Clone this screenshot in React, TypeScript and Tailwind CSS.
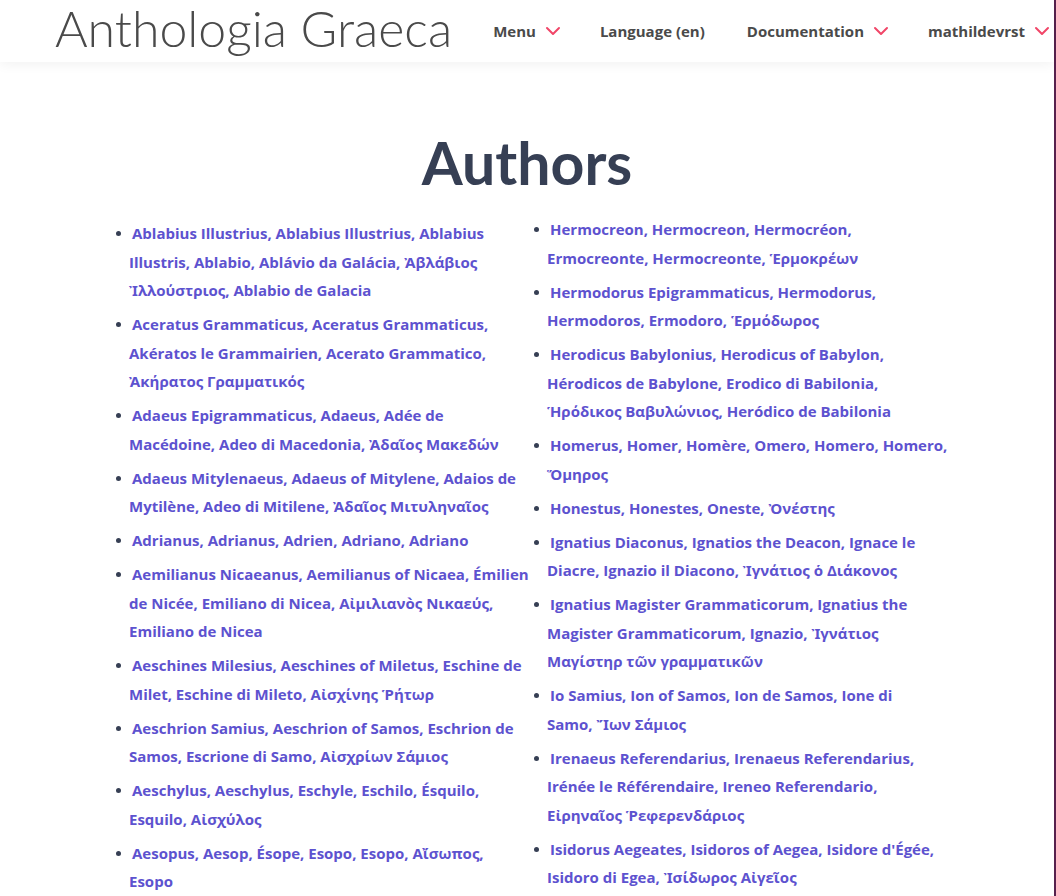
import { ChevronDown } from 'lucide-react';

const left = [
  'Ablabius Illustrius, Ablabius Illustrius, Ablabius Illustris, Ablabio, Ablávio da Galácia, Ἀβλάβιος Ἰλλούστριος, Ablabio de Galacia',
  'Aceratus Grammaticus, Aceratus Grammaticus, Akératos le Grammairien, Acerato Grammatico, Ἀκήρατος Γραμματικός',
  'Adaeus Epigrammaticus, Adaeus, Adée de Macédoine, Adeo di Macedonia, Ἀδαῖος Μακεδών',
  'Adaeus Mitylenaeus, Adaeus of Mitylene, Adaios de Mytilène, Adeo di Mitilene, Ἀδαῖος Μιτυληναῖος',
  'Adrianus, Adrianus, Adrien, Adriano, Adriano',
  'Aemilianus Nicaeanus, Aemilianus of Nicaea, Émilien de Nicée, Emiliano di Nicea, Αἰμιλιανὸς Νικαεύς, Emiliano de Nicea',
  'Aeschines Milesius, Aeschines of Miletus, Eschine de Milet, Eschine di Mileto, Αἰσχίνης Ῥήτωρ',
  'Aeschrion Samius, Aeschrion of Samos, Eschrion de Samos, Escrione di Samo, Αἰσχρίων Σάμιος',
  'Aeschylus, Aeschylus, Eschyle, Eschilo, Ésquilo, Esquilo, Αἰσχύλος',
  'Aesopus, Aesop, Ésope, Esopo, Esopo, Αἴσωπος, Esopo',
];

const right = [
  'Hermocreon, Hermocreon, Hermocréon, Ermocreonte, Hermocreonte, Ἑρμοκρέων',
  'Hermodorus Epigrammaticus, Hermodorus, Hermodoros, Ermodoro, Ἑρμόδωρος',
  'Herodicus Babylonius, Herodicus of Babylon, Hérodicos de Babylone, Erodico di Babilonia, Ἡρόδικος Βαβυλώνιος, Heródico de Babilonia',
  'Homerus, Homer, Homère, Omero, Homero, Homero, Ὅμηρος',
  'Honestus, Honestes, Oneste, Ὀνέστης',
  'Ignatius Diaconus, Ignatios the Deacon, Ignace le Diacre, Ignazio il Diacono, Ἰγνάτιος ὁ Διάκονος',
  'Ignatius Magister Grammaticorum, Ignatius the Magister Grammaticorum, Ignazio, Ἰγνάτιος Μαγίστηρ τῶν γραμματικῶν',
  'Io Samius, Ion of Samos, Ion de Samos, Ione di Samo,\u00a0Ἴων Σάμιος',
  'Irenaeus Referendarius, Irenaeus Referendarius, Irénée le Référendaire, Ireneo Referendario, Εἰρηναῖος Ῥεφερενδάριος',
  "Isidorus Aegeates, Isidoros of Aegea, Isidore d'Égée, Isidoro di Egea, Ἰσίδωρος Αἰγεῖος",
];

const NavItem = ({ label, dropdown = true }: { label: string; dropdown?: boolean }) => (
  <div className="flex shrink-0 items-center gap-[5px] whitespace-nowrap text-[15px] font-bold text-[#4a4a4a]">
    <span className={dropdown ? '' : 'pr-[7px]'}>{label}</span>
    {dropdown && <ChevronDown size={24} strokeWidth={2} className="text-[#f14668]" />}
  </div>
);

const AuthorList = ({ items, className }: { items: string[]; className?: string }) => (
  <ul className={className}>
    {items.map((name) => (
      <li
        key={name}
        className="mb-[5.5px] indent-[3px] leading-[28.5px] before:-ml-[16px] before:mr-[11px] before:inline-block before:h-[5px] before:w-[5px] before:rounded-full before:bg-[#363f54] before:align-[3px] before:content-['']"
      >
        <a href="#" className="text-[#5d52cf]">
          {name}
        </a>
      </li>
    ))}
  </ul>
);

export default function App() {
  return (
    <div className="flex h-[896px] overflow-hidden bg-white font-['Open_Sans','Noto_Sans',sans-serif]">
      <div className="min-w-0 flex-1">
        <header className="relative z-10 flex h-[62px] items-center bg-white pl-[55px] shadow-[0_2px_12px_rgba(0,0,0,0.06)]">
          <h1 className="shrink-0 whitespace-nowrap pb-[6px] font-['Lato',sans-serif] text-[50px] font-light leading-[1.2] text-[#4a4a4a]">
            Anthologia Graeca
          </h1>
          <nav className="ml-auto flex items-center gap-[35px]">
            <NavItem label="Menu" />
            <NavItem label="Language (en)" dropdown={false} />
            <NavItem label="Documentation" />
            <NavItem label="mathildevrst" />
          </nav>
        </header>

        <main className="pt-[71px]">
          <h2 className="text-center font-['Lato',sans-serif] text-[59px] font-bold leading-none text-[#363f54]">
            Authors
          </h2>
          <div className="mt-[23px] grid grid-cols-[402px_405px] gap-[16px] pl-[129px] text-[15px] font-bold">
            <AuthorList items={left} className="pt-[4px]" />
            <AuthorList items={right} />
          </div>
        </main>
      </div>
      <div className="w-[2px] bg-[#57214d]" />
    </div>
  );
}
